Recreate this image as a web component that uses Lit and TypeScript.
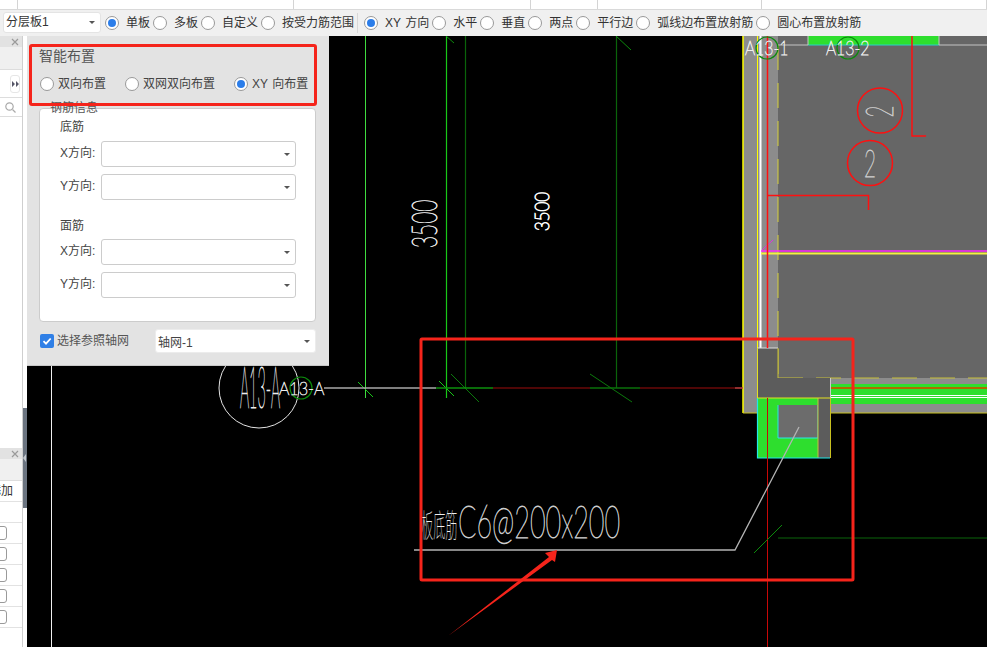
import { LitElement, html, css, svg } from "lit";
import { customElement } from "lit/decorators.js";

const radio = (on = false) => html`<span class="radio ${on ? "on" : ""}"></span>`;
const arrow = html`<span class="caret"></span>`;

const toolbarItems: [string, boolean][] = [
  ["单板", true],
  ["多板", false],
  ["自定义", false],
  ["按受力筋范围", false],
];
const toolbarItems2: [string, boolean][] = [
  ["XY 方向", true],
  ["水平", false],
  ["垂直", false],
  ["两点", false],
  ["平行边", false],
  ["弧线边布置放射筋", false],
  ["圆心布置放射筋", false],
];
const topCells: [number, string][] = [
  [18, ""],
  [276, "配筋设置"],
  [237, "负筋设置"],
  [67, "连筋"],
  [164, "板受力筋"],
  [225, "板受力筋二次钢筋"],
];

@customElement("app-root")
export class AppRoot extends LitElement {
  static styles = css`
    :host {
      display: block;
      width: 987px;
      height: 647px;
      overflow: hidden;
      position: relative;
      font-family: "Liberation Sans", "Noto Sans CJK SC", sans-serif;
      font-size: 12px;
      color: #333;
      background: #fff;
    }
    .top {
      display: flex;
      height: 9px;
      overflow: hidden;
      background: #fff;
      border-bottom: 1px solid #d9d9d9;
    }
    .cell {
      border-right: 1px solid #d4d4d4;
      box-sizing: border-box;
      text-align: center;
      line-height: 12px;
      height: 9px;
      overflow: hidden;
      white-space: nowrap;
    }
    .cell span {
      display: block;
      margin-top: -11px;
    }
    .toolbar {
      display: flex;
      align-items: center;
      gap: 3px;
      box-sizing: border-box;
      height: 26px;
      padding: 0 0 1px 3px;
      background: #f0f0f0;
      white-space: nowrap;
      word-spacing: 1px;
    }
    .select {
      display: flex;
      align-items: center;
      justify-content: space-between;
      box-sizing: border-box;
      background: #fff;
      border-radius: 3px;
      padding: 0 5px 0 3px;
      color: #333;
    }
    .select.tb {
      width: 98px;
      height: 21px;
      margin-right: 1px;
      border: 1px solid #e4e4e4;
      padding-left: 2px;
    }
    .select.tb span {
      line-height: 14px;
      padding-bottom: 1px;
    }
    .caret {
      width: 0;
      height: 0;
      border-left: 3px solid transparent;
      border-right: 3px solid transparent;
      border-top: 3px solid #555;
    }
    .radio {
      box-sizing: border-box;
      display: inline-flex;
      align-items: center;
      justify-content: center;
      flex: none;
      width: 14px;
      height: 14px;
      border-radius: 50%;
      border: 1px solid #999;
      background: #fff;
    }
    .radio.on::after {
      content: "";
      width: 8px;
      height: 8px;
      border-radius: 50%;
      background: #2b7de9;
    }
    .ritem {
      display: flex;
      align-items: center;
      gap: 7px;
    }
    .ritem span:last-child {
      line-height: 14px;
    }
    .sep {
      width: 1px;
      height: 20px;
      background: #d8d8d8;
      margin: 0 3px 0 0;
    }
    .body {
      display: flex;
      height: 611px;
    }
    .side {
      flex: none;
      width: 27px;
      background: #fff;
      display: flex;
      overflow: hidden;
    }
    .panels {
      width: 22px;
      border-right: 1px solid #cfcfcf;
      display: flex;
      flex-direction: column;
      flex: none;
    }
    .strip {
      width: 4px;
      display: flex;
      flex-direction: column;
    }
    .strip .gap1 {
      height: 372px;
      background: #fff;
    }
    .strip .thumb {
      height: 100px;
      background: #6b7480;
      display: flex;
      align-items: center;
      justify-content: center;
    }
    .strip .thumb i {
      width: 0;
      height: 0;
      margin-left: -1px;
      border-top: 4px solid transparent;
      border-bottom: 4px solid transparent;
      border-right: 3px solid #c4c9cf;
    }
    .phead {
      height: 11px;
      background: #e2e2e2;
      display: flex;
      justify-content: flex-end;
      align-items: center;
      padding-right: 3px;
      flex: none;
    }
    .pband1 {
      height: 22px;
      background: #f0f0f0;
      border-bottom: 1px solid #ddd;
      flex: none;
    }
    .pexp {
      height: 27px;
      border-bottom: 1px solid #ddd;
      display: flex;
      align-items: center;
      justify-content: flex-end;
      padding-right: 2px;
      flex: none;
    }
    .expbtn {
      box-sizing: border-box;
      width: 10px;
      height: 18px;
      border: 1px solid #e6e6e6;
      border-radius: 3px;
      display: flex;
      align-items: center;
      justify-content: center;
    }
    .psearch {
      height: 18px;
      border-bottom: 1px solid #ddd;
      padding-left: 5px;
      display: flex;
      align-items: center;
      flex: none;
    }
    .pspace {
      height: 331px;
      flex: none;
    }
    .pband2 {
      height: 21px;
      background: #f0f0f0;
      border-bottom: 1px solid #ddd;
      flex: none;
    }
    .prow {
      height: 20px;
      border-bottom: 1px solid #e2e2e2;
      flex: none;
      overflow: hidden;
      display: flex;
      align-items: center;
    }
    .prow .add {
      color: #333;
      line-height: 20px;
      margin-left: -11px;
    }
    .prow .cb {
      box-sizing: border-box;
      width: 14px;
      height: 14px;
      margin-left: -7px;
      border: 1px solid #9a9a9a;
      border-radius: 3px;
      background: #fff;
      flex: none;
    }
    .canvas {
      flex: 1;
      background: #000;
      display: block;
      min-width: 0;
    }
    svg.cad {
      display: block;
    }
    .thin text {
      font-family: "Lato", "Liberation Sans", sans-serif;
      font-weight: 100;
      stroke: currentColor;
      stroke-width: 0.7px;
      vector-effect: non-scaling-stroke;
    }
    .thin text.bold {
      stroke-width: 1.1px;
    }
    .thin text.cjk {
      font-family: "Noto Sans CJK SC", sans-serif;
      stroke: none;
    }
    .dialog {
      position: absolute;
      left: 27px;
      top: 36px;
      width: 302px;
      height: 330px;
      box-sizing: border-box;
      background: #e3e3e3;
      border-bottom: 1px solid #c8c8c8;
      padding: 11px 13px 0 12px;
      color: #555;
    }
    .dtitle {
      line-height: 18px;
      font-size: 14px;
    }
    .dradios {
      display: flex;
      height: 18px;
      margin-top: 10px;
      padding-left: 1px;
      gap: 19px;
      align-items: center;
      color: #444;
      word-spacing: 1px;
    }
    .dradios .ritem {
      gap: 4px;
    }
    .group {
      position: relative;
      box-sizing: border-box;
      height: 214px;
      margin-top: 15px;
      background: #fff;
      border: 1px solid #ccc;
      border-radius: 4px;
      padding: 10px 0 0 20px;
    }
    .legend {
      position: absolute;
      left: 10px;
      top: -9px;
      line-height: 16px;
      color: #555;
    }
    .ghead {
      line-height: 16px;
      margin-bottom: 6px;
      color: #444;
    }
    .ghead.second {
      margin-top: 17px;
      padding-top: 1px;
      margin-bottom: 5px;
    }
    .frow {
      display: flex;
      align-items: center;
      gap: 6px;
      height: 26px;
      margin-bottom: 7px;
      color: #444;
    }
    .frow label {
      width: 35px;
      text-align: right;
      white-space: nowrap;
      line-height: 14px;
      padding-bottom: 2px;
    }
    .dselect {
      width: 195px;
      height: 26px;
      border: 1px solid #ccc;
    }
    .dbottom {
      display: flex;
      align-items: center;
      height: 24px;
      margin-top: 7px;
      padding-left: 1px;
    }
    .check {
      width: 14px;
      height: 14px;
      border-radius: 2px;
      background: #2f7fe6;
      display: flex;
      align-items: center;
      justify-content: center;
      flex: none;
    }
    .dbottom .lbl {
      margin-left: 3px;
      width: 98px;
      color: #555;
      line-height: 14px;
    }
    .gridsel {
      width: 161px;
      height: 24px;
      border: 1px solid #ececec;
      color: #444;
      padding-left: 2px;
    }
    .redbox {
      position: absolute;
      left: 29px;
      top: 44px;
      width: 288px;
      height: 62px;
      box-sizing: border-box;
      border: 3px solid #f5241b;
      border-radius: 3px;
    }
  `;

  private cad() {
    const g = "#2ede2e";
    return svg`
      <svg class="cad" width="960" height="611" viewBox="27 36 960 611">
        <rect x="27" y="36" width="960" height="611" fill="#000"/>
        <!-- slab -->
        <rect x="743" y="36" width="244" height="377" fill="#8c8c8c"/>
        <rect x="778" y="36" width="209" height="342" fill="#666"/>
        <rect x="808" y="36" width="131" height="9" fill="${g}"/>
        <path d="M808 45H939" stroke="#2ad0c8" stroke-width="1"/>
        <path d="M808 36V45M939 45H987M939 36V45M778 45H808" stroke="#c4c4c4" stroke-width="1" fill="none"/>
        <path d="M743 36V413" stroke="#ff0" stroke-width="1.500"/>
        <path d="M757.500 36V348" stroke="#ff0" stroke-width="1"/>
        <path d="M760.500 36V348" stroke="#fff" stroke-width="2"/>
        <path d="M778 45V378" stroke="#d6d038" stroke-width="1" stroke-dasharray="25 13"/>
        <path d="M761 251H987" stroke="#ff28ff" stroke-width="1.500"/>
        <path d="M761 253.500H987" stroke="#f4f040" stroke-width="2"/>
        <path d="M762 250L773 240" stroke="#e030e0" stroke-width="1"/>
        <!-- lower band -->
        <rect x="830" y="384" width="157" height="20" fill="${g}"/>
        <path d="M830 388H987" stroke="#b06a00" stroke-width="2"/>
        <path d="M830 395.500H987" stroke="#fff" stroke-width="1"/>
        <path d="M830 397.500H987" stroke="#fff" stroke-width="1"/>
        <path d="M743 413H987" stroke="#c8c020" stroke-width="1"/>
        <path d="M778 378H987" stroke="#c8c038" stroke-width="1" stroke-dasharray="25 13"/>
        <!-- column -->
        <rect x="757.500" y="398" width="73" height="60" fill="${g}"/>
        <rect x="778" y="405" width="40" height="33" fill="#6c6c6c"/>
        <path d="M778 405V438H818V405" fill="none" stroke="#28e8e8" stroke-width="1"/>
        <rect x="818" y="398" width="12.500" height="60" fill="#5c5c5c"/>
        <path d="M818 398V458" stroke="#c8c040" stroke-width="1"/>
        <path d="M830.500 398V458" stroke="#c8c020" stroke-width="1"/>
        <path d="M757.500 398V458H830" fill="none" stroke="#20e8e8" stroke-width="1.200"/>
        <!-- notch -->
        <path d="M757.500 348H778V378H830.500V398H757.500Z" fill="#5c5c5c"/>
        <path d="M757.500 348H778" stroke="#ddd" stroke-width="1"/>
        <path d="M830.500 378V398" stroke="#ccc" stroke-width="1"/>
        <path d="M778 348V378" stroke="#c8c038" stroke-width="1"/>
        <path d="M757.500 398H830.500M757.500 348V398" stroke="#e4e020" stroke-width="1"/>
        <!-- red lines -->
        <path d="M767.500 36V348" stroke="#ff1010" stroke-width="1.500"/>
        <path d="M767.500 398V647" stroke="#c80808" stroke-width="1"/>
        <path d="M767.500 195.500H868.500V210" fill="none" stroke="#ff1010" stroke-width="1.500"/>
        <path d="M912 36V136H926" fill="none" stroke="#ff1010" stroke-width="1.500"/>
        <circle cx="880" cy="110.500" r="22.500" fill="none" stroke="#ff1010" stroke-width="1.500"/>
        <circle cx="870" cy="163" r="22.500" fill="none" stroke="#ff1010" stroke-width="1.500"/>
        <!-- axis lines -->
        <path d="M51.500 36V647" stroke="#f0f0f0" stroke-width="1"/>
        <path d="M365.500 36V398" stroke="#3fdc3f" stroke-width="1"/>
        <path d="M446.500 36V398" stroke="#18c818" stroke-width="1.200"/>
        <path d="M465.500 36V388" stroke="#0a640a" stroke-width="1.200"/>
        <path d="M616.500 36V388" stroke="#0a640a" stroke-width="1.200"/>
        <path d="M446 36L454 43M616 36L631 50" stroke="#0c8a0c" stroke-width="1"/>
        <path d="M358 382L373 397M439 381L454 396" stroke="#18c818" stroke-width="1"/>
        <path d="M451 374L479 402M590 374L632 402" stroke="#0c7a0c" stroke-width="1"/>
        <path d="M324 388H436" stroke="#a8a8a8" stroke-width="1.500"/>
        <path d="M436 388H493" stroke="#0c900c" stroke-width="1.500"/>
        <path d="M493 388H590" stroke="#6a0808" stroke-width="1.500"/>
        <path d="M590 388H640" stroke="#0a700a" stroke-width="1.500"/>
        <path d="M640 388H735" stroke="#6a0808" stroke-width="1.500"/>
        <path d="M735 388H743" stroke="#c04040" stroke-width="1.500"/>
        <path d="M778 538H987" stroke="#0a640a" stroke-width="1"/>
        <path d="M754 553L782 525" stroke="#0c8a0c" stroke-width="1"/>
        <!-- leader -->
        <path d="M799 427L735 550H414" fill="none" stroke="#b4b4b4" stroke-width="1.300"/>
        <!-- bubbles -->
        <circle cx="259" cy="388" r="40" fill="none" stroke="#e4e4e4" stroke-width="1"/>
        <circle cx="301" cy="388" r="11" fill="none" stroke="#0c8a0c" stroke-width="1.200"/>
        <circle cx="767" cy="48" r="11" fill="none" stroke="#0c8a0c" stroke-width="1.200"/>
        <circle cx="848" cy="48" r="11" fill="none" stroke="#0c8a0c" stroke-width="1.200"/>
        <!-- texts -->
        <g class="thin" fill="#eee" color="#eee">
          <text transform="translate(240 408) scale(.65 2.600)" font-size="22">A13-A</text>
          <text transform="translate(279 395) scale(.9 1)" font-size="18">A13-A</text>
          <text transform="translate(745 55) scale(.79 1)" font-size="20">A13-1</text>
          <text transform="translate(826 55) scale(.79 1)" font-size="20">A13-2</text>
          <text transform="translate(437 248) rotate(-90) scale(.87 1.500)" font-size="24">3500</text>
          <text class="bold" transform="translate(548.500 231) rotate(-90) scale(.84 .96)" font-size="20" fill="#fff" color="#fff">3500</text>
          <text transform="translate(893 117.500) rotate(-90) scale(.8 1.440)" font-size="26" fill="#ccc" color="#ccc">2</text>
          <text transform="translate(864 177) scale(.8 1.440)" font-size="26" fill="#ccc" color="#ccc">2</text>
          <text class="cjk" transform="translate(421 537) scale(.42 1.100)" font-size="29">板底筋</text>
          <text transform="translate(458 538) scale(.6 1)" font-size="45" fill="#ccc" color="#ccc">C6@200x200</text>
        </g>
        <!-- annotation -->
        <rect x="421" y="339" width="432" height="241" rx="1" fill="none" stroke="#f5241b" stroke-width="3"/>
        <polygon points="448,636 549,557 545,553 557,550 555,562 552,560" fill="#f5241b"/>
      </svg>
    `;
  }

  render() {
    const x = html`<svg width="8" height="8" viewBox="0 0 8 8"><path d="M1 1L7 7M7 1L1 7" stroke="#9a9a9a" stroke-width="1.200"/></svg>`;
    return html`
      <div class="top">
        ${topCells.map(([w, t]) => html`<div class="cell" style="width:${w}px"><span>${t}</span></div>`)}
      </div>
      <div class="toolbar">
        <div class="select tb"><span>分层板1</span>${arrow}</div>
        ${toolbarItems.map(([t, on]) => html`<div class="ritem">${radio(on)}<span>${t}</span></div>`)}
        <div class="sep"></div>
        ${toolbarItems2.map(([t, on]) => html`<div class="ritem">${radio(on)}<span>${t}</span></div>`)}
      </div>
      <div class="body">
        <div class="side">
          <div class="panels">
            <div class="phead">${x}</div>
            <div class="pband1"></div>
            <div class="pexp">
              <div class="expbtn">
                <svg width="7" height="6" viewBox="0 0 7 6"><path d="M0 0L3 3L0 6ZM4 0L7 3L4 6Z" fill="#556"/></svg>
              </div>
            </div>
            <div class="psearch">
              <svg width="11" height="11" viewBox="0 0 11 11"><circle cx="4.500" cy="4.500" r="3.700" fill="none" stroke="#aaa" stroke-width="1.200"/><path d="M7.500 7.500L10.500 10.500" stroke="#aaa" stroke-width="1.200"/></svg>
            </div>
            <div class="pspace"></div>
            <div class="phead">${x}</div>
            <div class="pband2"></div>
            <div class="prow"><span class="add">添加</span></div>
            <div class="prow"></div>
            ${[0, 1, 2, 3, 4].map(() => html`<div class="prow"><span class="cb"></span></div>`)}
          </div>
          <div class="strip">
            <div class="gap1"></div>
            <div class="thumb"><i></i></div>
          </div>
        </div>
        <div class="canvas">${this.cad()}</div>
      </div>
      <div class="dialog">
        <div class="dtitle">智能布置</div>
        <div class="dradios">
          <div class="ritem">${radio()}<span>双向布置</span></div>
          <div class="ritem">${radio()}<span>双网双向布置</span></div>
          <div class="ritem">${radio(true)}<span>XY 向布置</span></div>
        </div>
        <div class="group">
          <div class="legend">钢筋信息</div>
          <div class="ghead">底筋</div>
          <div class="frow"><label>X方向:</label><div class="select dselect"><span></span>${arrow}</div></div>
          <div class="frow"><label>Y方向:</label><div class="select dselect"><span></span>${arrow}</div></div>
          <div class="ghead second">面筋</div>
          <div class="frow"><label>X方向:</label><div class="select dselect"><span></span>${arrow}</div></div>
          <div class="frow"><label>Y方向:</label><div class="select dselect"><span></span>${arrow}</div></div>
        </div>
        <div class="dbottom">
          <span class="check">
            <svg width="10" height="10" viewBox="0 0 10 10"><path d="M1.500 5.200L4 7.700L8.700 2.500" fill="none" stroke="#fff" stroke-width="1.800"/></svg>
          </span>
          <span class="lbl">选择参照轴网</span>
          <div class="select gridsel"><span>轴网-1</span>${arrow}</div>
        </div>
      </div>
      <div class="redbox"></div>
    `;
  }
}
